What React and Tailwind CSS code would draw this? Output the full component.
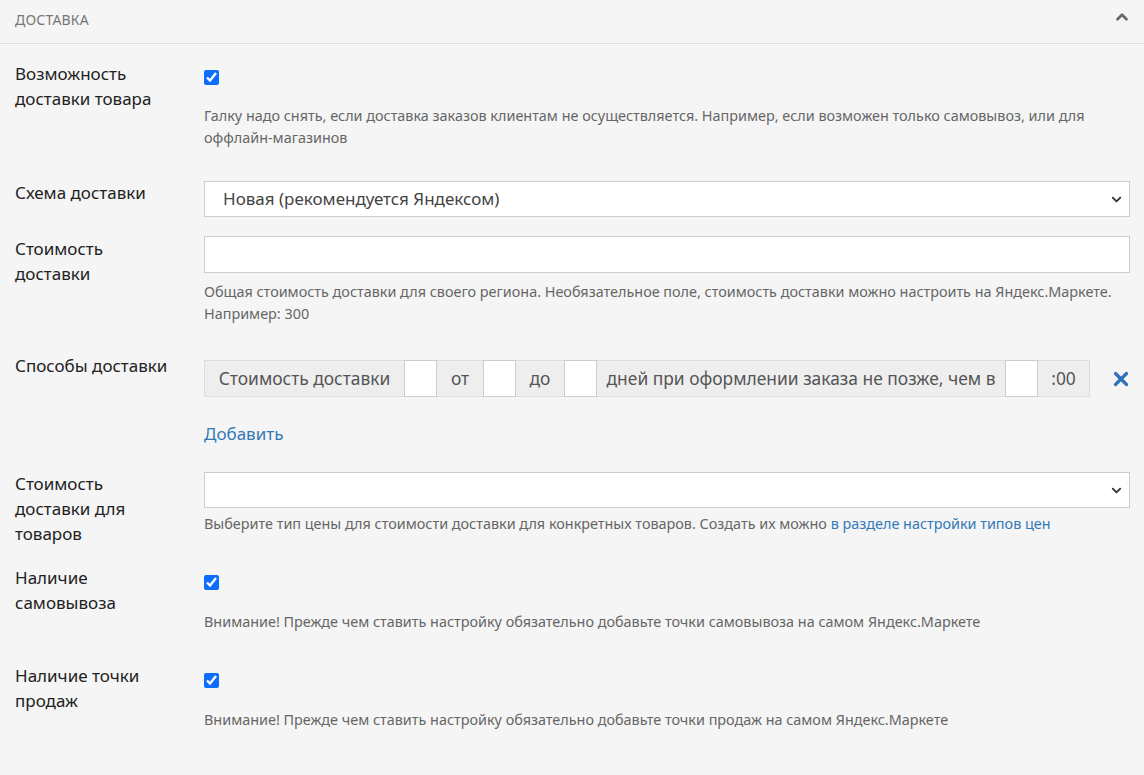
import { ChevronDown, ChevronUp, X } from "lucide-react";

const font = { fontFamily: '"Noto Sans", "Open Sans", sans-serif' };

function Check() {
  return (
    <input
      type="checkbox"
      defaultChecked
      className="w-[15px] h-[15px] accent-[#0d6efd] m-0 block"
    />
  );
}

function Row({ label, className = "", children }) {
  return (
    <div className={"flex " + className}>
      <div className="w-[204px] shrink-0 pl-[15px] pr-3 text-[17px] leading-[25px] text-[#222]">
        {label}
      </div>
      <div className="flex-1 pr-[14px]">{children}</div>
    </div>
  );
}

function Help({ children, className = "" }) {
  return (
    <div className={"text-[14.4px] leading-[22px] text-[#666] " + className}>
      {children}
    </div>
  );
}

function Select({ value }) {
  return (
    <div className="relative h-[36px] bg-white border border-[#ccc] flex items-center pl-[18px] text-[17px] text-[#444]">
      {value}
      <ChevronDown
        size={15}
        strokeWidth={3}
        className="absolute right-[5px] top-[10px] text-[#333]"
      />
    </div>
  );
}

function Addon({ children, className = "" }) {
  return (
    <div
      className={
        "h-full flex items-center justify-center bg-[#eee] border-y border-[#ddd] text-[17.4px] text-[#555] " +
        className
      }
    >
      {children}
    </div>
  );
}

function Box() {
  return <div className="h-full w-[33px] bg-white border border-[#ccc]" />;
}

export default function App() {
  return (
    <div className="min-h-[775px] bg-[#f5f5f5]" style={font}>
      <div className="h-[44px] border-b border-[#ddd] flex items-center justify-between pl-[15px] pr-[13px]">
        <span className="text-[14px] text-[#777] tracking-[0.2px] -mt-[5px]">ДОСТАВКА</span>
        <ChevronUp size={18} strokeWidth={3.5} className="text-[#666] -mt-[10px]" />
      </div>

      <Row label={<>Возможность<br />доставки товара</>} className="mt-[17px]">
        <div className="pt-[9px]">
          <Check />
        </div>
        <Help className="mt-[20px]">
          Галку надо снять, если доставка заказов клиентам не осуществляется. Например, если возможен только самовывоз, или для
          <br />
          оффлайн-магазинов
        </Help>
      </Row>

      <Row label="Схема доставки" className="mt-[31px]">
        <div className="pt-[1px]">
          <Select value="Новая (рекомендуется Яндексом)" />
        </div>
      </Row>

      <Row label={<>Стоимость<br />доставки</>} className="mt-[19px]">
        <div className="h-[37px] bg-white border border-[#ccc]" />
        <Help className="mt-[8px]">
          Общая стоимость доставки для своего региона. Необязательное поле, стоимость доставки можно настроить на Яндекс.Маркете.
          <br />
          Например: 300
        </Help>
      </Row>

      <Row label="Способы доставки" className="mt-[28px]">
        <div className="flex items-center mt-[7px]">
          <div className="flex h-[37px] w-[886px]">
            <Addon className="w-[200px] border-l">Стоимость доставки</Addon>
            <Box />
            <Addon className="w-[46px]">от</Addon>
            <Box />
            <Addon className="w-[48px]">до</Addon>
            <Box />
            <Addon className="w-[408px]">дней при оформлении заказа не позже, чем в</Addon>
            <Box />
            <Addon className="flex-1 border-r">:00</Addon>
          </div>
          <X size={22} strokeWidth={3.5} className="ml-[20px] text-[#2f72b8]" />
        </div>
        <div className="mt-[24px] text-[17px] leading-[25px] text-[#3379b7]">Добавить</div>
      </Row>

      <Row label={<>Стоимость<br />доставки для<br />товаров</>} className="mt-[25px]">
        <div className="pt-[1px]">
          <Select value="" />
        </div>
        <Help className="mt-[5px]">
          Выберите тип цены для стоимости доставки для конкретных товаров. Создать их можно{" "}
          <span className="text-[#3379b7]">в разделе настройки типов цен</span>
        </Help>
      </Row>

      <Row label={<>Наличие<br />самовывоза</>} className="mt-[19px]">
        <div className="pt-[10px]">
          <Check />
        </div>
        <Help className="mt-[21px]">
          Внимание! Прежде чем ставить настройку обязательно добавьте точки самовывоза на самом Яндекс.Маркете
        </Help>
      </Row>

      <Row label={<>Наличие точки<br />продаж</>} className="mt-[30px]">
        <div className="pt-[10px]">
          <Check />
        </div>
        <Help className="mt-[21px]">
          Внимание! Прежде чем ставить настройку обязательно добавьте точки продаж на самом Яндекс.Маркете
        </Help>
      </Row>
    </div>
  );
}
